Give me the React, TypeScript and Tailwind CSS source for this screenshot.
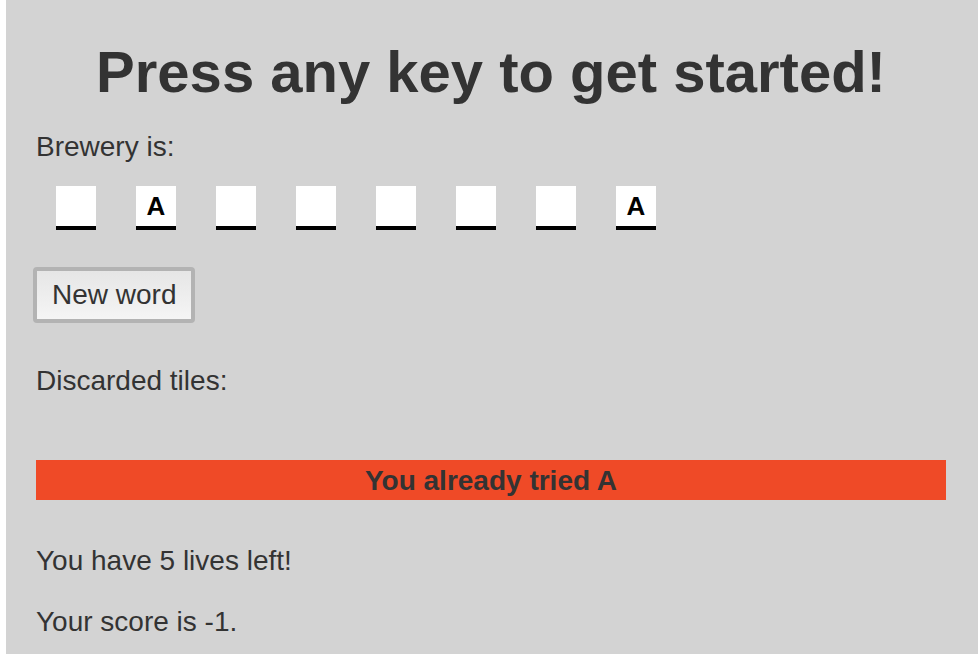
import React from 'react';

const letters = ['', 'A', '', '', '', '', '', 'A'];

const Tile = ({ letter }: { letter: string }) => (
  <div className="mx-5 w-10 h-11 bg-white border-b-4 border-black flex items-center justify-center text-[26px] leading-[40px] font-bold text-black">
    {letter}
  </div>
);

const App = () => {
  return (
    <div className="min-h-screen bg-white pl-[6px]" style={{ fontFamily: '"Liberation Sans", Helvetica, Arial, sans-serif' }}>
      <div className="min-h-screen bg-[#d3d3d3] pl-[30px] pr-[32px] pt-[43px] pb-5 text-[#333333] text-[28px] leading-[28px]">
        <h1 className="text-center text-[58px] leading-[58px] font-bold">Press any key to get started!</h1>

        <p className="mt-[32px]">Brewery is:</p>

        <div className="mt-[25px] flex">
          {letters.map((l, i) => (
            <Tile key={i} letter={l} />
          ))}
        </div>

        <button className="mt-[37px] -ml-[3px] block h-[56px] px-[15px] border-4 border-[#b3b3b3] rounded-[4px] bg-gradient-to-b from-[#e6e6e6] to-[#f5f5f5] text-[28px] leading-[28px] text-[#333333]">
          New word
        </button>

        <p className="mt-[44px]">Discarded tiles:</p>

        <div className="mt-[65px] h-10 bg-[#ef4a27] flex items-center justify-center font-bold pt-[2px]">
          You already tried A
        </div>

        <p className="mt-[47px]">You have 5 lives left!</p>
        <p className="mt-[33px]">Your score is -1.</p>
      </div>
    </div>
  );
};

export default App;
